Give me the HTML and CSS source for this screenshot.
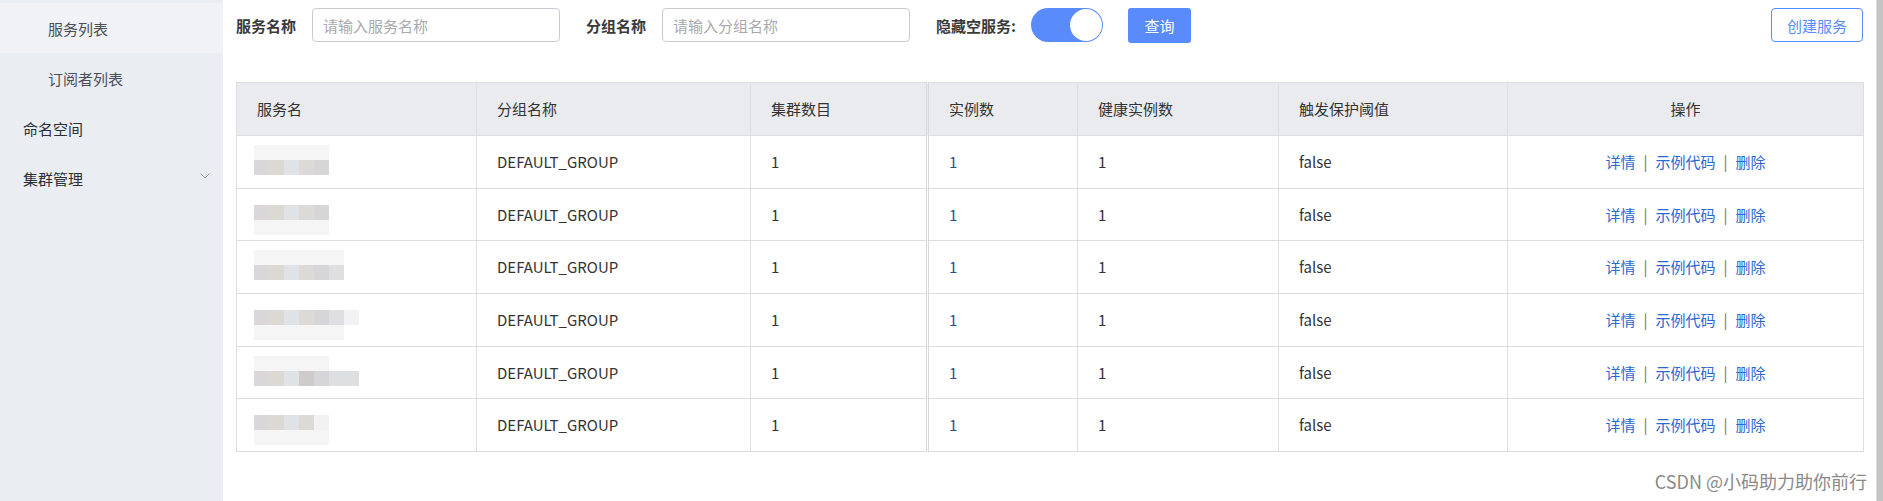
FILE: index.html
```html
<!DOCTYPE html>
<html lang="zh-CN">
<head>
<meta charset="utf-8">
<title>服务列表</title>
<link rel="stylesheet" href="styles.css">
</head>
<body>
<div class="app">
  <aside class="sidebar">
    <div class="menu-item sub active">服务列表</div>
    <div class="menu-item sub">订阅者列表</div>
    <div class="menu-item">命名空间</div>
    <div class="menu-item">集群管理
      <svg class="chev" width="10" height="6" viewBox="0 0 10 6"><polyline points="0.5,0.5 5,5 9.5,0.5" fill="none" stroke="#9a9ea6" stroke-width="1"/></svg>
    </div>
  </aside>

  <main class="main">
    <div class="toolbar">
      <span class="form-label">服务名称</span>
      <input class="input" placeholder="请输入服务名称">
      <span class="form-label">分组名称</span>
      <input class="input" placeholder="请输入分组名称">
      <span class="form-label switch-label">隐藏空服务:</span>
      <span class="switch"><span class="knob"></span></span>
      <button class="btn-primary">查询</button>
      <span class="spacer"></span>
      <button class="btn-outline">创建服务</button>
    </div>

    <table class="svc-table">
      <colgroup>
        <col class="c1"><col class="c2"><col class="c3"><col class="c4"><col class="c5"><col class="c6"><col class="c7">
      </colgroup>
      <thead>
        <tr>
          <th>服务名</th><th>分组名称</th><th class="dbl">集群数目</th><th>实例数</th><th>健康实例数</th><th>触发保护阈值</th><th class="ops">操作</th>
        </tr>
      </thead>
      <tbody>
        <tr>
          <td class="name low"><div class="mosaic">
            <div class="mrow light"><i></i><i></i><i></i><i></i><i></i></div>
            <div class="mrow"><i class="k1"></i><i class="k2"></i><i class="k3"></i><i class="k4"></i><i class="k5"></i></div>
          </div></td>
          <td>DEFAULT_GROUP</td><td class="dbl">1</td><td class="blue">1</td><td>1</td><td>false</td>
          <td class="ops"><a>详情</a><span class="sep">|</span><a>示例代码</a><span class="sep">|</span><a>删除</a></td>
        </tr>
        <tr>
          <td class="name high"><div class="mosaic">
            <div class="mrow"><i class="k1"></i><i class="k2"></i><i class="k3"></i><i class="k4"></i><i class="k5"></i></div>
            <div class="mrow light"><i></i><i></i><i></i><i></i><i></i></div>
          </div></td>
          <td>DEFAULT_GROUP</td><td class="dbl">1</td><td class="blue">1</td><td>1</td><td>false</td>
          <td class="ops"><a>详情</a><span class="sep">|</span><a>示例代码</a><span class="sep">|</span><a>删除</a></td>
        </tr>
        <tr>
          <td class="name low"><div class="mosaic">
            <div class="mrow light"><i></i><i></i><i></i><i></i><i></i><i></i></div>
            <div class="mrow"><i class="k1"></i><i class="k2"></i><i class="k3"></i><i class="k4"></i><i class="k5"></i><i class="k6"></i></div>
          </div></td>
          <td>DEFAULT_GROUP</td><td class="dbl">1</td><td class="blue">1</td><td>1</td><td>false</td>
          <td class="ops"><a>详情</a><span class="sep">|</span><a>示例代码</a><span class="sep">|</span><a>删除</a></td>
        </tr>
        <tr>
          <td class="name high"><div class="mosaic">
            <div class="mrow"><i class="k1"></i><i class="k2"></i><i class="k3"></i><i class="k4"></i><i class="k5"></i><i class="k6"></i><i class="k8"></i></div>
            <div class="mrow light"><i></i><i></i><i></i><i></i><i></i><i></i></div>
          </div></td>
          <td>DEFAULT_GROUP</td><td class="dbl">1</td><td class="blue">1</td><td>1</td><td>false</td>
          <td class="ops"><a>详情</a><span class="sep">|</span><a>示例代码</a><span class="sep">|</span><a>删除</a></td>
        </tr>
        <tr>
          <td class="name low"><div class="mosaic">
            <div class="mrow light"><i></i><i></i><i></i><i></i><i></i></div>
            <div class="mrow"><i class="k1"></i><i class="k2"></i><i class="k3"></i><i class="k7"></i><i class="k5"></i><i class="k6"></i><i class="k6"></i></div>
          </div></td>
          <td>DEFAULT_GROUP</td><td class="dbl">1</td><td class="blue">1</td><td>1</td><td>false</td>
          <td class="ops"><a>详情</a><span class="sep">|</span><a>示例代码</a><span class="sep">|</span><a>删除</a></td>
        </tr>
        <tr>
          <td class="name high"><div class="mosaic">
            <div class="mrow"><i class="k1"></i><i class="k2"></i><i class="k3"></i><i class="k4"></i><i class="k8"></i></div>
            <div class="mrow light"><i></i><i></i><i></i><i></i><i></i></div>
          </div></td>
          <td>DEFAULT_GROUP</td><td class="dbl">1</td><td class="blue">1</td><td>1</td><td>false</td>
          <td class="ops"><a>详情</a><span class="sep">|</span><a>示例代码</a><span class="sep">|</span><a>删除</a></td>
        </tr>
      </tbody>
    </table>
  </main>

  <div class="scrollbar"></div>
</div>
<div class="watermark">CSDN @小码助力助你前行</div>
</body>
</html>
```

FILE: styles.css
```css
html, body {
  margin: 0;
  padding: 0;
  height: 100%;
}

body {
  font-family: "Noto Sans CJK SC", "Noto Sans", sans-serif;
  font-size: 15px;
  color: #333;
  background: #fff;
  overflow: hidden;
}

.app {
  display: flex;
  height: 501px;
}

/* ---------- sidebar ---------- */
.sidebar {
  width: 223px;
  flex: none;
  box-sizing: border-box;
  padding-top: 3px;
  background: #eaedf1;
}

.menu-item {
  height: 50px;
  display: flex;
  align-items: center;
  padding-left: 23px;
  color: #2b2f36;
}

.menu-item.sub {
  padding-left: 48px;
  color: #4a4f57;
}

.menu-item.active {
  background: #f0f2f6;
}

.chev {
  margin-left: auto;
  margin-right: 13px;
  margin-top: -4px;
}

/* ---------- main ---------- */
.main {
  flex: 1;
  min-width: 0;
  padding: 8px 13px 0 13px;
}

.toolbar {
  display: flex;
  align-items: center;
  height: 34px;
}

.form-label {
  font-weight: bold;
  color: #3a3a3a;
  margin-right: 16px;
  white-space: nowrap;
}

.switch-label {
  margin-right: 15px;
}

.input {
  width: 248px;
  height: 34px;
  box-sizing: border-box;
  border: 1px solid #c8c9d2;
  border-radius: 4px;
  padding: 0 10px;
  margin: 0 26px 0 0;
  font-family: inherit;
  font-size: 15px;
  color: #333;
  outline: none;
}

.input::placeholder {
  color: #a8a8ad;
}

.switch {
  width: 72px;
  height: 34px;
  box-sizing: border-box;
  border-radius: 17px;
  background: #5a8bfd;
  display: flex;
  align-items: center;
  justify-content: flex-end;
  padding: 0 1px;
  margin-right: 25px;
}

.knob {
  width: 32px;
  height: 32px;
  border-radius: 50%;
  background: #fff;
}

.btn-primary {
  width: 63px;
  height: 35px;
  border: none;
  border-radius: 3px;
  background: #5a8bfd;
  color: #fff;
  font-family: inherit;
  font-size: 15px;
  padding: 0;
  margin-top: 1px;
}

.spacer {
  flex: 1;
}

.btn-outline {
  width: 92px;
  height: 34px;
  box-sizing: border-box;
  border: 1px solid #5a8bfd;
  border-radius: 4px;
  background: #fff;
  color: #5a8bfd;
  font-family: inherit;
  font-size: 15px;
  padding: 0;
}

/* ---------- table ---------- */
.svc-table {
  margin-top: 40px;
  width: 1627px;
  table-layout: fixed;
  border-collapse: collapse;
}

.c1 { width: 240px; }
.c2 { width: 274px; }
.c3 { width: 177px; }
.c4 { width: 150px; }
.c5 { width: 201px; }
.c6 { width: 229px; }
.c7 { width: 356px; }

.svc-table tr {
  height: 52.7px;
}

.svc-table thead tr {
  height: 53px;
}

.svc-table th,
.svc-table td {
  border: 1px solid #dcdee3;
  padding: 0 0 0 20px;
  text-align: left;
  font-weight: normal;
  color: #333;
  white-space: nowrap;
  line-height: 20px;
}

.svc-table th {
  background: #e9ebef;
}

.svc-table .dbl {
  border-right: 3px double #d6d8dd;
}

.svc-table .ops {
  text-align: center;
  padding-left: 0;
}

.svc-table td.blue {
  color: #2c4f8a;
}

.ops a {
  color: #2a68d3;
}

.sep {
  color: #8c6a42;
  margin: 0 8px;
}

/* blurred service names */
.svc-table td.name {
  vertical-align: top;
  padding-left: 17px;
}

.svc-table td.name.low {
  padding-top: 9px;
}

.svc-table td.name.high {
  padding-top: 16px;
}

.mrow {
  display: flex;
  height: 15px;
}

.mrow i {
  width: 15px;
  height: 15px;
  background: #dadadc;
}

.mrow.light i {
  background: #f5f5f5;
}

.mrow i.k1 { background: #d9d7da; }
.mrow i.k2 { background: #dcd8d3; }
.mrow i.k3 { background: #e0e3e6; }
.mrow i.k4 { background: #dcd9d7; }
.mrow i.k5 { background: #d6d5d8; }
.mrow i.k6 { background: #dedfe0; }
.mrow i.k7 { background: #cfcbcb; }
.mrow i.k8 { background: #f2f2f4; }

/* ---------- scrollbar & watermark ---------- */
.scrollbar {
  width: 7px;
  flex: none;
  background: #c4c4c4;
  border-left: 1px solid #dcdcdc;
  box-sizing: border-box;
}

.watermark {
  position: absolute;
  right: 16px;
  top: 469px;
  font-family: "Noto Sans CJK SC", "Liberation Sans", sans-serif;
  font-size: 18px;
  line-height: 24px;
  color: #8a8a8a;
  text-shadow: 0 0 1px #fff;
}
```
